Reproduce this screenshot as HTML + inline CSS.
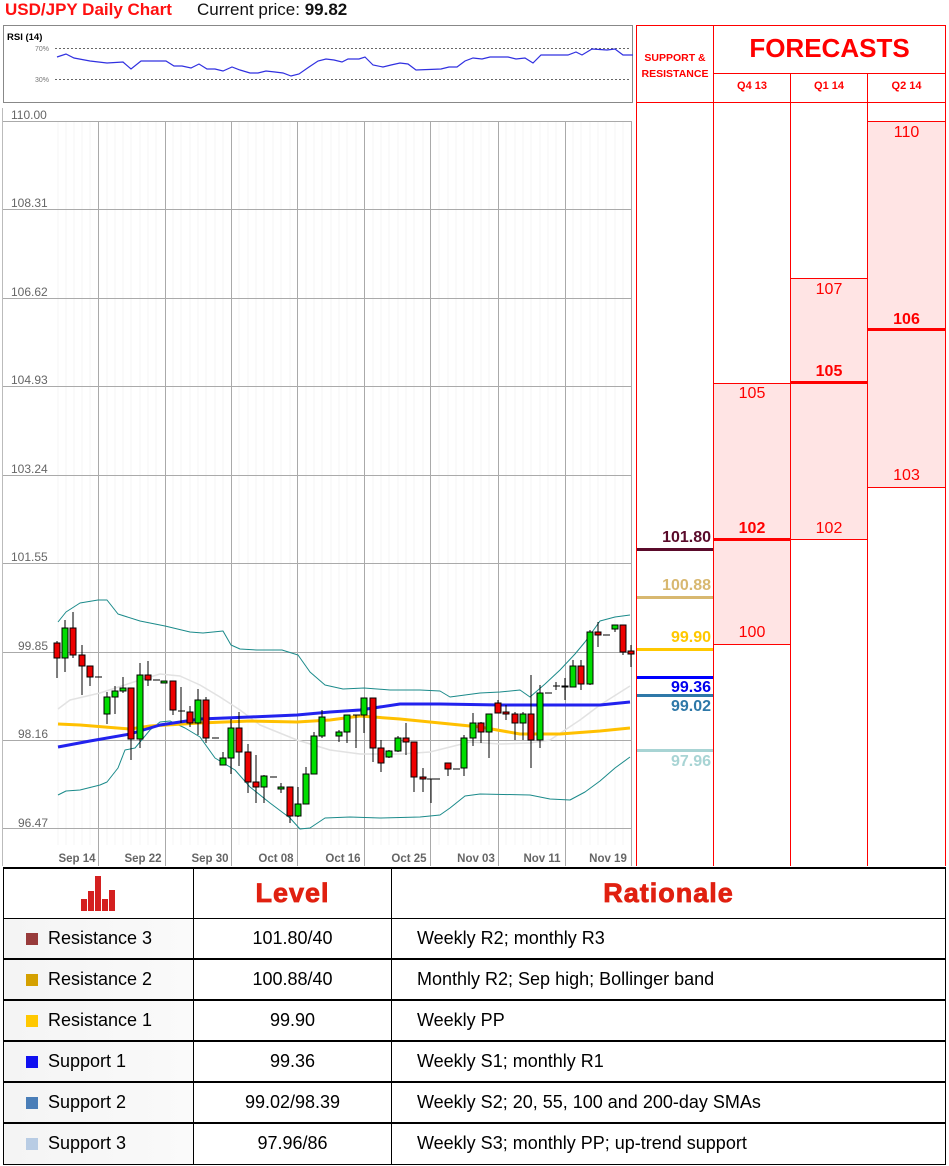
<!DOCTYPE html>
<html><head><meta charset="utf-8"><style>
*{margin:0;padding:0;box-sizing:border-box}
body{width:949px;height:1166px;background:#fff;position:relative;font-family:"Liberation Sans",sans-serif;overflow:hidden}
.a{position:absolute}
.t{position:absolute;white-space:nowrap}
table{border-collapse:collapse;position:absolute;left:3px;top:867px;width:943px}
td{border:1px solid #000;height:41px;font-size:18px;color:#000}
tr.r td{border-top:2px solid #000}
td.c{text-align:center}
td.l{padding-left:22px;background:linear-gradient(90deg,#f4f4f4,#fafafa)}
td.x{padding-left:25px}
.sq{display:inline-block;width:12px;height:12px;margin-right:10px;vertical-align:-1px}
.h{font-family:"Liberation Sans",sans-serif;font-weight:bold;color:#e02010;font-size:27px;letter-spacing:1px;-webkit-text-stroke:0.8px #e02010}
</style></head><body>
<div class="t" style="left:5px;top:0;font-size:17px;font-weight:bold;color:#ff1010">USD/JPY Daily Chart</div>
<div class="t" style="left:197px;top:0;font-size:17px;color:#111">Current price: <b>99.82</b></div>

<svg class="a" style="left:0;top:0" width="636" height="866" viewBox="0 0 636 866">
<rect x="3.5" y="25.5" width="629" height="77" fill="#fff" stroke="#888"/>
<text x="7" y="40" font-size="9.5" font-weight="bold" font-family="Liberation Sans">RSI (14)</text>
<text x="35" y="51" font-size="7" fill="#777" font-family="Liberation Sans">70%</text>
<text x="35" y="82" font-size="7" fill="#777" font-family="Liberation Sans">30%</text>
<line x1="55" y1="48.5" x2="630" y2="48.5" stroke="#666" stroke-dasharray="2,2"/>
<line x1="55" y1="79.5" x2="630" y2="79.5" stroke="#666" stroke-dasharray="2,2"/>
<polyline fill="none" stroke="#3030e0" stroke-width="1.2" points="57,57 66,54 74,58 90,61 107,63 123,62 131,69 141,61 166,61 174,66 182,66 191,68 199,64 207,69 215,69 223,71 232,67 240,70 250,73 258,73 266,71 275,72 283,73 291,76 299,74 309,67 318,61 326,59 334,60 342,62 348,59 359,59 365,57 373,65 383,67 391,65 400,63 408,64 416,70 441,69 449,67 457,67 465,61 473,58 482,59 490,57 498,57 508,57 516,59 525,58 533,63 541,55 557,55 568,55 576,52 582,55 592,49 607,50 615,49 623,55 633,55"/>
<line x1="2.5" y1="108" x2="2.5" y2="866" stroke="#bbb"/>
<g stroke="#f4f4f4">
<line x1="58" y1="121" x2="58" y2="845"/><line x1="66" y1="121" x2="66" y2="845"/><line x1="74" y1="121" x2="74" y2="845"/><line x1="82" y1="121" x2="82" y2="845"/><line x1="90" y1="121" x2="90" y2="845"/>
<line x1="107" y1="121" x2="107" y2="845"/><line x1="115" y1="121" x2="115" y2="845"/><line x1="123" y1="121" x2="123" y2="845"/><line x1="131" y1="121" x2="131" y2="845"/><line x1="140" y1="121" x2="140" y2="845"/><line x1="148" y1="121" x2="148" y2="845"/><line x1="156" y1="121" x2="156" y2="845"/>
<line x1="173" y1="121" x2="173" y2="845"/><line x1="181" y1="121" x2="181" y2="845"/><line x1="190" y1="121" x2="190" y2="845"/><line x1="198" y1="121" x2="198" y2="845"/><line x1="206" y1="121" x2="206" y2="845"/><line x1="215" y1="121" x2="215" y2="845"/><line x1="223" y1="121" x2="223" y2="845"/>
<line x1="239" y1="121" x2="239" y2="845"/><line x1="248" y1="121" x2="248" y2="845"/><line x1="256" y1="121" x2="256" y2="845"/><line x1="264" y1="121" x2="264" y2="845"/><line x1="273" y1="121" x2="273" y2="845"/><line x1="281" y1="121" x2="281" y2="845"/><line x1="290" y1="121" x2="290" y2="845"/>
<line x1="306" y1="121" x2="306" y2="845"/><line x1="314" y1="121" x2="314" y2="845"/><line x1="322" y1="121" x2="322" y2="845"/><line x1="331" y1="121" x2="331" y2="845"/><line x1="339" y1="121" x2="339" y2="845"/><line x1="347" y1="121" x2="347" y2="845"/><line x1="356" y1="121" x2="356" y2="845"/>
<line x1="373" y1="121" x2="373" y2="845"/><line x1="381" y1="121" x2="381" y2="845"/><line x1="389" y1="121" x2="389" y2="845"/><line x1="398" y1="121" x2="398" y2="845"/><line x1="406" y1="121" x2="406" y2="845"/><line x1="414" y1="121" x2="414" y2="845"/><line x1="423" y1="121" x2="423" y2="845"/>
<line x1="439" y1="121" x2="439" y2="845"/><line x1="448" y1="121" x2="448" y2="845"/><line x1="456" y1="121" x2="456" y2="845"/><line x1="464" y1="121" x2="464" y2="845"/><line x1="473" y1="121" x2="473" y2="845"/><line x1="481" y1="121" x2="481" y2="845"/><line x1="489" y1="121" x2="489" y2="845"/>
<line x1="506" y1="121" x2="506" y2="845"/><line x1="515" y1="121" x2="515" y2="845"/><line x1="523" y1="121" x2="523" y2="845"/><line x1="531" y1="121" x2="531" y2="845"/><line x1="540" y1="121" x2="540" y2="845"/><line x1="548" y1="121" x2="548" y2="845"/><line x1="556" y1="121" x2="556" y2="845"/>
<line x1="573" y1="121" x2="573" y2="845"/><line x1="581" y1="121" x2="581" y2="845"/><line x1="590" y1="121" x2="590" y2="845"/><line x1="598" y1="121" x2="598" y2="845"/><line x1="606" y1="121" x2="606" y2="845"/><line x1="615" y1="121" x2="615" y2="845"/><line x1="623" y1="121" x2="623" y2="845"/>
</g>
<g stroke="#aaa">
<line x1="3" y1="121.5" x2="632" y2="121.5"/><line x1="3" y1="209.5" x2="632" y2="209.5"/><line x1="3" y1="298.5" x2="632" y2="298.5"/><line x1="3" y1="386.5" x2="632" y2="386.5"/><line x1="3" y1="475.5" x2="632" y2="475.5"/><line x1="3" y1="563.5" x2="632" y2="563.5"/><line x1="3" y1="652.5" x2="632" y2="652.5"/><line x1="3" y1="740.5" x2="632" y2="740.5"/><line x1="3" y1="828.5" x2="632" y2="828.5"/>
<line x1="98.5" y1="121" x2="98.5" y2="866"/><line x1="165.5" y1="121" x2="165.5" y2="866"/><line x1="231.5" y1="121" x2="231.5" y2="866"/><line x1="297.5" y1="121" x2="297.5" y2="866"/><line x1="364.5" y1="121" x2="364.5" y2="866"/><line x1="430.5" y1="121" x2="430.5" y2="866"/><line x1="498.5" y1="121" x2="498.5" y2="866"/><line x1="565.5" y1="121" x2="565.5" y2="866"/><line x1="631.5" y1="121" x2="631.5" y2="866"/>
</g>
<g font-family="Liberation Sans" font-size="12" fill="#666">
<text x="11" y="119">110.00</text><text x="11" y="207">108.31</text><text x="11" y="296">106.62</text><text x="11" y="384">104.93</text><text x="11" y="473">103.24</text><text x="11" y="561">101.55</text><text x="18" y="650">99.85</text><text x="18" y="738">98.16</text><text x="18" y="827">96.47</text>
</g>
<g font-family="Liberation Sans" font-size="11.5" font-weight="bold" fill="#666" text-anchor="middle">
<text x="77" y="862">Sep 14</text><text x="143" y="862">Sep 22</text><text x="210" y="862">Sep 30</text><text x="276" y="862">Oct 08</text><text x="343" y="862">Oct 16</text><text x="409" y="862">Oct 25</text><text x="476" y="862">Nov 03</text><text x="542" y="862">Nov 11</text><text x="608" y="862">Nov 19</text>
</g>
<g fill="none" stroke-linejoin="round">
<polyline stroke="#e2e2e2" stroke-width="1.5" points="58,709 70,700 100,693 140,680 160,674 180,676 200,685 220,697 240,710 260,725 297,740 330,750 360,754 400,754 430,752 470,742 500,744 530,743 550,740 580,720 600,705 630,686"/>
<polyline stroke="#1a8a8a" stroke-width="1" points="58,622 66,612 80,603 98,600 107,600 118,614 140,621 165,626 190,632 203,633 223,631 231,645 240,649 257,650 282,650 298,655 310,672 325,685 343,689 364,688 390,690 420,690 440,691 450,697 480,693 500,692 520,690 530,697 545,684 560,670 575,654 585,642 600,621 615,617 630,615"/>
<polyline stroke="#1a8a8a" stroke-width="1" points="58,795 66,791 80,790 100,785 107,782 118,768 125,750 135,748 150,730 160,722 170,721 185,728 200,737 215,758 235,770 250,787 270,803 290,818 300,829 310,828 325,818 350,817 380,818 420,817 440,815 450,808 465,796 480,794 530,795 550,799 570,800 585,792 600,781 615,768 630,757"/>
<polyline stroke="#ffc000" stroke-width="3" points="58,724 80,725 130,729 150,726 200,723 250,721 297,722 330,720 360,716 400,719 440,723 480,727 520,734 540,734 560,734 600,731 630,728"/>
<polyline stroke="#2222ee" stroke-width="3" points="58,747 90,741 130,734 160,725 200,719 250,717 297,715 330,712 360,710 400,704 440,704 500,705 560,705 600,705 630,702"/>
</g>
<g stroke="#000" stroke-width="1">
<line x1="57" y1="641" x2="57" y2="678"/><rect x="54" y="643" width="6" height="15" fill="#e00"/>
<line x1="65" y1="620" x2="65" y2="672"/><rect x="62" y="628" width="6" height="30" fill="#0d0"/>
<line x1="73" y1="612" x2="73" y2="658"/><rect x="70" y="628" width="6" height="27" fill="#e00"/>
<line x1="82" y1="645" x2="82" y2="695"/><rect x="79" y="655" width="6" height="11" fill="#e00"/>
<line x1="90" y1="666" x2="90" y2="686"/><rect x="87" y="666" width="6" height="11" fill="#e00"/>
<line x1="95" y1="677" x2="102" y2="677"/>
<line x1="107" y1="692" x2="107" y2="724"/><rect x="104" y="697" width="6" height="17" fill="#0d0"/>
<line x1="115" y1="686" x2="115" y2="714"/><rect x="112" y="691" width="6" height="6" fill="#0d0"/>
<line x1="123" y1="677" x2="123" y2="693"/><rect x="120" y="688" width="6" height="3" fill="#0d0"/>
<line x1="131" y1="688" x2="131" y2="760"/><rect x="128" y="688" width="6" height="51" fill="#e00"/>
<line x1="140" y1="663" x2="140" y2="748"/><rect x="137" y="675" width="6" height="64" fill="#0d0"/>
<line x1="148" y1="661" x2="148" y2="686"/><rect x="145" y="675" width="6" height="5" fill="#e00"/>
<line x1="153" y1="680" x2="160" y2="680"/>
<rect x="161" y="681" width="6" height="2" fill="#0d0"/>
<line x1="173" y1="681" x2="173" y2="715"/><rect x="170" y="681" width="6" height="29" fill="#e00"/>
<line x1="181" y1="687" x2="181" y2="723"/><line x1="178" y1="711" x2="185" y2="711"/>
<line x1="190" y1="706" x2="190" y2="727"/><rect x="187" y="712" width="6" height="11" fill="#e00"/>
<line x1="198" y1="689" x2="198" y2="735"/><rect x="195" y="700" width="6" height="23" fill="#0d0"/>
<line x1="206" y1="697" x2="206" y2="743"/><rect x="203" y="700" width="6" height="38" fill="#e00"/>
<line x1="212" y1="738" x2="219" y2="738"/>
<line x1="223" y1="752" x2="223" y2="765"/><rect x="220" y="758" width="6" height="7" fill="#0d0"/>
<line x1="231" y1="719" x2="231" y2="774"/><rect x="228" y="728" width="6" height="30" fill="#0d0"/>
<line x1="239" y1="712" x2="239" y2="766"/><rect x="236" y="728" width="6" height="24" fill="#e00"/>
<line x1="248" y1="744" x2="248" y2="793"/><rect x="245" y="752" width="6" height="30" fill="#e00"/>
<line x1="256" y1="755" x2="256" y2="803"/><rect x="253" y="782" width="6" height="5" fill="#e00"/>
<line x1="264" y1="775" x2="264" y2="803"/><rect x="261" y="776" width="6" height="11" fill="#0d0"/>
<line x1="270" y1="777" x2="277" y2="777"/>
<line x1="281" y1="783" x2="281" y2="793"/><rect x="278" y="787" width="6" height="2" fill="#0d0"/>
<line x1="290" y1="787" x2="290" y2="823"/><rect x="287" y="787" width="6" height="29" fill="#e00"/>
<line x1="298" y1="787" x2="298" y2="817"/><rect x="295" y="804" width="6" height="12" fill="#0d0"/>
<line x1="306" y1="767" x2="306" y2="804"/><rect x="303" y="774" width="6" height="30" fill="#0d0"/>
<line x1="314" y1="732" x2="314" y2="774"/><rect x="311" y="736" width="6" height="38" fill="#0d0"/>
<line x1="322" y1="710" x2="322" y2="738"/><rect x="319" y="717" width="6" height="19" fill="#0d0"/>
<line x1="339" y1="730" x2="339" y2="742"/><rect x="336" y="732" width="6" height="4" fill="#0d0"/>
<line x1="347" y1="715" x2="347" y2="743"/><rect x="344" y="715" width="6" height="17" fill="#0d0"/>
<line x1="356" y1="715" x2="356" y2="748"/><line x1="353" y1="715" x2="360" y2="715"/>
<line x1="364" y1="698" x2="364" y2="733"/><rect x="361" y="698" width="6" height="17" fill="#0d0"/>
<line x1="373" y1="698" x2="373" y2="762"/><rect x="370" y="698" width="6" height="50" fill="#e00"/>
<line x1="381" y1="740" x2="381" y2="772"/><rect x="378" y="748" width="6" height="15" fill="#e00"/>
<line x1="389" y1="750" x2="389" y2="758"/><rect x="386" y="751" width="6" height="6" fill="#0d0"/>
<line x1="398" y1="736" x2="398" y2="752"/><rect x="395" y="738" width="6" height="13" fill="#0d0"/>
<line x1="406" y1="723" x2="406" y2="755"/><rect x="403" y="738" width="6" height="4" fill="#e00"/>
<line x1="414" y1="742" x2="414" y2="792"/><rect x="411" y="742" width="6" height="35" fill="#e00"/>
<line x1="423" y1="768" x2="423" y2="792"/><rect x="420" y="777" width="6" height="2" fill="#e00"/>
<line x1="431" y1="779" x2="431" y2="803"/><line x1="427" y1="779" x2="440" y2="779"/>
<line x1="448" y1="763" x2="448" y2="776"/><rect x="445" y="763" width="6" height="6" fill="#e00"/>
<line x1="453" y1="769" x2="460" y2="769"/>
<line x1="464" y1="735" x2="464" y2="776"/><rect x="461" y="738" width="6" height="30" fill="#0d0"/>
<line x1="473" y1="713" x2="473" y2="746"/><rect x="470" y="723" width="6" height="15" fill="#0d0"/>
<line x1="481" y1="722" x2="481" y2="743"/><rect x="478" y="723" width="6" height="9" fill="#e00"/>
<line x1="489" y1="714" x2="489" y2="758"/><rect x="486" y="714" width="6" height="18" fill="#0d0"/>
<line x1="498" y1="700" x2="498" y2="713"/><rect x="495" y="703" width="6" height="10" fill="#e00"/>
<line x1="506" y1="705" x2="506" y2="720"/><rect x="503" y="712" width="6" height="2" fill="#e00"/>
<line x1="515" y1="712" x2="515" y2="740"/><rect x="512" y="714" width="6" height="9" fill="#e00"/>
<line x1="523" y1="712" x2="523" y2="740"/><rect x="520" y="714" width="6" height="9" fill="#0d0"/>
<line x1="531" y1="675" x2="531" y2="768"/><rect x="528" y="714" width="6" height="26" fill="#e00"/>
<line x1="540" y1="685" x2="540" y2="748"/><rect x="537" y="693" width="6" height="47" fill="#0d0"/>
<line x1="545" y1="693" x2="552" y2="693"/>
<line x1="556" y1="682" x2="556" y2="690"/><line x1="553" y1="686" x2="560" y2="686"/>
<line x1="565" y1="678" x2="565" y2="700"/><rect x="562" y="686" width="6" height="1" fill="#e00"/>
<line x1="573" y1="660" x2="573" y2="687"/><rect x="570" y="666" width="6" height="21" fill="#0d0"/>
<line x1="581" y1="660" x2="581" y2="690"/><rect x="578" y="666" width="6" height="18" fill="#e00"/>
<line x1="590" y1="630" x2="590" y2="685"/><rect x="587" y="632" width="6" height="52" fill="#0d0"/>
<line x1="598" y1="622" x2="598" y2="647"/><rect x="595" y="632" width="6" height="3" fill="#e00"/>
<line x1="603" y1="635" x2="610" y2="635"/>
<line x1="615" y1="625" x2="615" y2="632"/><rect x="612" y="625" width="6" height="4" fill="#0d0"/>
<line x1="623" y1="625" x2="623" y2="655"/><rect x="620" y="625" width="6" height="27" fill="#e00"/>
<line x1="631" y1="645" x2="631" y2="667"/><rect x="628" y="651" width="6" height="3" fill="#e00"/>
</g>
</svg>

<!-- right panel -->
<div class="a" style="left:636px;top:25px;width:310px;height:841px;border:1px solid #f00;border-bottom:none"></div>
<div class="a" style="left:713px;top:25px;width:1px;height:841px;background:#f00"></div>
<div class="a" style="left:790px;top:73px;width:1px;height:793px;background:#f00"></div>
<div class="a" style="left:867px;top:73px;width:1px;height:793px;background:#f00"></div>
<div class="a" style="left:713px;top:73px;width:233px;height:1px;background:#f00"></div>
<div class="a" style="left:636px;top:102px;width:310px;height:1px;background:#f00"></div>
<div class="t" style="left:713px;top:33px;width:233px;text-align:center;font-size:26px;font-weight:bold;color:#f00">FORECASTS</div>
<div class="t" style="left:637px;top:50px;width:76px;text-align:center;font-size:10.5px;font-weight:bold;color:#f00;line-height:16px">SUPPORT &amp;<br>RESISTANCE</div>
<div class="t" style="left:714px;top:80px;width:76px;text-align:center;font-size:11px;font-weight:bold;color:#f00">Q4 13</div>
<div class="t" style="left:791px;top:80px;width:76px;text-align:center;font-size:11px;font-weight:bold;color:#f00">Q1 14</div>
<div class="t" style="left:868px;top:80px;width:77px;text-align:center;font-size:11px;font-weight:bold;color:#f00">Q2 14</div>

<div class="a" style="left:714px;top:383px;width:76px;height:262px;background:#ffe4e4;border-top:1px solid #f00;border-bottom:1px solid #f00"></div>
<div class="a" style="left:714px;top:538px;width:76px;height:3px;background:#f00"></div>
<div class="t" style="left:714px;top:385px;width:76px;text-align:center;font-size:16px;color:#f00">105</div>
<div class="t" style="left:714px;top:520px;width:76px;text-align:center;font-size:16px;font-weight:bold;color:#f00">102</div>
<div class="t" style="left:714px;top:624px;width:76px;text-align:center;font-size:16px;color:#f00">100</div>

<div class="a" style="left:791px;top:278px;width:76px;height:262px;background:#ffe4e4;border-top:1px solid #f00;border-bottom:1px solid #f00"></div>
<div class="a" style="left:791px;top:381px;width:76px;height:3px;background:#f00"></div>
<div class="t" style="left:791px;top:281px;width:76px;text-align:center;font-size:16px;color:#f00">107</div>
<div class="t" style="left:791px;top:363px;width:76px;text-align:center;font-size:16px;font-weight:bold;color:#f00">105</div>
<div class="t" style="left:791px;top:520px;width:76px;text-align:center;font-size:16px;color:#f00">102</div>

<div class="a" style="left:868px;top:121px;width:77px;height:367px;background:#ffe4e4;border-top:1px solid #f00;border-bottom:1px solid #f00"></div>
<div class="a" style="left:868px;top:328px;width:77px;height:3px;background:#f00"></div>
<div class="t" style="left:868px;top:124px;width:77px;text-align:center;font-size:16px;color:#f00">110</div>
<div class="t" style="left:868px;top:311px;width:77px;text-align:center;font-size:16px;font-weight:bold;color:#f00">106</div>
<div class="t" style="left:868px;top:467px;width:77px;text-align:center;font-size:16px;color:#f00">103</div>

<div class="a" style="left:637px;top:548px;width:76px;height:3px;background:#5a0a2a"></div>
<div class="t" style="left:637px;top:529px;width:74px;text-align:right;font-size:16px;font-weight:bold;color:#5a0a2a">101.80</div>
<div class="a" style="left:637px;top:596px;width:76px;height:3px;background:#d8b870"></div>
<div class="t" style="left:637px;top:577px;width:74px;text-align:right;font-size:16px;font-weight:bold;color:#d8b870">100.88</div>
<div class="a" style="left:637px;top:648px;width:76px;height:3px;background:#ffc800"></div>
<div class="t" style="left:637px;top:629px;width:74px;text-align:right;font-size:16px;font-weight:bold;color:#ffc800">99.90</div>
<div class="a" style="left:637px;top:676px;width:76px;height:3px;background:#0000ff"></div>
<div class="t" style="left:637px;top:679px;width:74px;text-align:right;font-size:16px;font-weight:bold;color:#0000ee">99.36</div>
<div class="a" style="left:637px;top:694px;width:76px;height:3px;background:#2e78a8"></div>
<div class="t" style="left:637px;top:698px;width:74px;text-align:right;font-size:16px;font-weight:bold;color:#2e78a8">99.02</div>
<div class="a" style="left:637px;top:749px;width:76px;height:3px;background:#a8d4d4"></div>
<div class="t" style="left:637px;top:753px;width:74px;text-align:right;font-size:16px;font-weight:bold;color:#a8d4d4">97.96</div>

<table>
<tr><td class="c" style="width:190px;height:50px;border-top:2px solid #000">
<svg width="36" height="36" viewBox="0 0 36 36" style="vertical-align:middle"><g fill="#d42020"><rect x="0" y="24" width="6" height="12"/><rect x="7" y="16" width="6" height="20"/><rect x="14" y="1" width="6" height="35"/><rect x="21" y="24" width="6" height="12"/><rect x="28" y="15" width="6" height="21"/></g></svg></td>
<td class="c h" style="width:198px;border-top:2px solid #000">Level</td>
<td class="c h" style="border-top:2px solid #000">Rationale</td></tr>
<tr><td class="l"><span class="sq" style="background:#983b3b"></span>Resistance 3</td><td class="c">101.80/40</td><td class="x">Weekly R2; monthly R3</td></tr>
<tr class="r"><td class="l"><span class="sq" style="background:#d4a000"></span>Resistance 2</td><td class="c">100.88/40</td><td class="x">Monthly R2; Sep high; Bollinger band</td></tr>
<tr class="r"><td class="l"><span class="sq" style="background:#ffc800"></span>Resistance 1</td><td class="c">99.90</td><td class="x">Weekly PP</td></tr>
<tr class="r"><td class="l"><span class="sq" style="background:#1010f0"></span>Support 1</td><td class="c">99.36</td><td class="x">Weekly S1; monthly R1</td></tr>
<tr class="r"><td class="l"><span class="sq" style="background:#4a7eb8"></span>Support 2</td><td class="c">99.02/98.39</td><td class="x">Weekly S2; 20, 55, 100 and 200-day SMAs</td></tr>
<tr class="r"><td class="l"><span class="sq" style="background:#b8cce4"></span>Support 3</td><td class="c">97.96/86</td><td class="x">Weekly S3; monthly PP; up-trend support</td></tr>
</table>
</body></html>
